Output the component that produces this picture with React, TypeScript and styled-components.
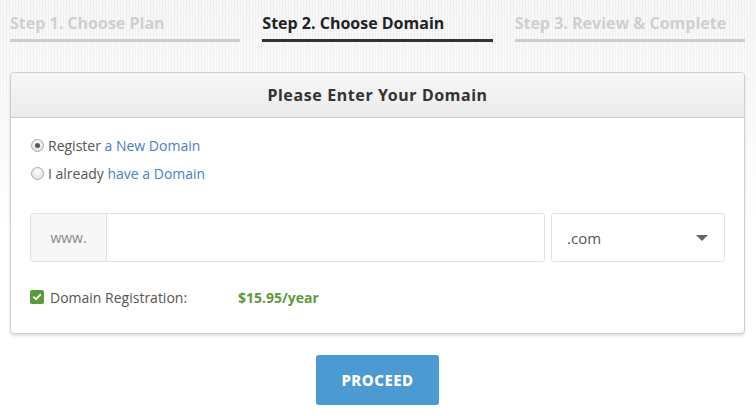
import React from "react";
import styled, { createGlobalStyle } from "styled-components";

const Global = createGlobalStyle`
  html, body { margin: 0; padding: 0; }
  body {
    min-height: 100vh;
    font-family: "Open Sans", "Liberation Sans", sans-serif;
    background:
      linear-gradient(to bottom, rgba(255,255,255,0) 0px, rgba(255,255,255,0.35) 90px, #fff 230px),
      repeating-linear-gradient(90deg, #eeeeee 0px, #eeeeee 1px, #f7f7f7 1px, #f7f7f7 3px);
  }
`;

const Page = styled.div`
  padding: 12px 11px 0 10px;
  display: flex;
  flex-direction: column;
  align-items: stretch;
`;

const Steps = styled.div`
  display: grid;
  grid-template-columns: repeat(3, 1fr);
  column-gap: 22px;
`;

const Step = styled.div<{ $active?: boolean }>`
  font-size: 16px;
  font-weight: 700;
  line-height: 22px;
  padding-bottom: 5px;
  color: ${(p) => (p.$active ? "#222" : "#cfcfcf")};
  border-bottom: 3px solid ${(p) => (p.$active ? "#333" : "#cdcdcd")};
  white-space: nowrap;
`;

const Panel = styled.div`
  margin-top: 30px;
  background: #fff;
  border: 1px solid #cfcfcf;
  border-radius: 4px;
  box-shadow: 0 2px 3px rgba(0, 0, 0, 0.12);
  overflow: hidden;
`;

const PanelHead = styled.div`
  height: 44px;
  display: flex;
  align-items: center;
  justify-content: center;
  background: linear-gradient(to bottom, #f7f7f7, #ebebeb);
  border-bottom: 1px solid #c8c8c8;
  font-family: "Noto Sans", "Open Sans", sans-serif;
  font-size: 16px;
  font-weight: 700;
  color: #333;
  letter-spacing: 0.6px;
`;

const PanelBody = styled.div`
  padding: 13px 19px 26px 19px;
`;

const RadioRow = styled.label`
  display: flex;
  align-items: center;
  height: 28px;
  font-size: 14px;
  color: #555;
  gap: 4px;
`;

const Radio = styled.span<{ $checked?: boolean }>`
  width: 11px;
  height: 11px;
  margin-left: 1px;
  border-radius: 50%;
  border: 1px solid #a9a9a9;
  background: radial-gradient(circle at 50% 35%, #fdfdfd, #dcdcdc);
  display: flex;
  align-items: center;
  justify-content: center;
  &::after {
    content: "";
    width: 5px;
    height: 5px;
    border-radius: 50%;
    background: ${(p) => (p.$checked ? "#555" : "transparent")};
  }
`;

const Link = styled.a`
  color: #4a80c8;
  text-decoration: none;
`;

const InputGroup = styled.div`
  margin-top: 26px;
  display: flex;
  gap: 6px;
  height: 49px;
`;

const Field = styled.div`
  flex: 1;
  display: flex;
  border: 1px solid #e2e2e2;
  border-radius: 3px;
  overflow: hidden;
`;

const Addon = styled.div`
  width: 75px;
  display: flex;
  align-items: center;
  justify-content: center;
  background: #f7f7f7;
  border-right: 1px solid #e2e2e2;
  font-size: 14px;
  color: #888;
`;

const TextInput = styled.input`
  flex: 1;
  border: none;
  outline: none;
  background: #fff;
`;

const Select = styled.div`
  width: 174px;
  display: flex;
  align-items: center;
  justify-content: space-between;
  padding: 0 16px 0 15px;
  box-sizing: border-box;
  border: 1px solid #e2e2e2;
  border-radius: 3px;
  font-size: 15px;
  color: #555;
`;

const Caret = styled.span`
  width: 0;
  height: 0;
  border-left: 6px solid transparent;
  border-right: 6px solid transparent;
  border-top: 6px solid #666;
`;

const RegRow = styled.div`
  margin-top: 25px;
  display: flex;
  align-items: center;
  height: 20px;
  font-size: 14px;
  color: #555;
`;

const Check = styled.span`
  width: 14px;
  height: 14px;
  border-radius: 2px;
  background: #5d9a3c;
  display: flex;
  align-items: center;
  justify-content: center;
  margin-right: 6px;
`;

const RegLabel = styled.span`
  width: 188px;
`;

const Price = styled.span`
  color: #5d9a3c;
  font-weight: 700;
`;

const ButtonRow = styled.div`
  display: flex;
  justify-content: center;
  margin-top: 21px;
`;

const Button = styled.button`
  width: 123px;
  height: 50px;
  border: none;
  border-radius: 3px;
  background: #4b9ad2;
  color: #fff;
  font-family: "Noto Sans", "Open Sans", sans-serif;
  font-weight: 800;
  font-size: 15px;
  letter-spacing: 0.5px;
`;

export default function App() {
  return (
    <>
      <Global />
      <Page>
        <Steps>
          <Step>Step 1. Choose Plan</Step>
          <Step $active>Step 2. Choose Domain</Step>
          <Step>Step 3. Review &amp; Complete</Step>
        </Steps>
        <Panel>
          <PanelHead>Please Enter Your Domain</PanelHead>
          <PanelBody>
            <RadioRow>
              <Radio $checked />
              <span>
                Register <Link>a New Domain</Link>
              </span>
            </RadioRow>
            <RadioRow>
              <Radio />
              <span>
                I already <Link>have a Domain</Link>
              </span>
            </RadioRow>
            <InputGroup>
              <Field>
                <Addon>www.</Addon>
                <TextInput />
              </Field>
              <Select>
                <span>.com</span>
                <Caret />
              </Select>
            </InputGroup>
            <RegRow>
              <Check>
                <svg width="10" height="10" viewBox="0 0 10 10">
                  <path d="M1.8 5.2 L4 7.2 L8.2 2.8" fill="none" stroke="#fff" strokeWidth="1.8" strokeLinecap="round" strokeLinejoin="round" />
                </svg>
              </Check>
              <RegLabel>Domain Registration:</RegLabel>
              <Price>$15.95/year</Price>
            </RegRow>
          </PanelBody>
        </Panel>
        <ButtonRow>
          <Button>PROCEED</Button>
        </ButtonRow>
      </Page>
    </>
  );
}
